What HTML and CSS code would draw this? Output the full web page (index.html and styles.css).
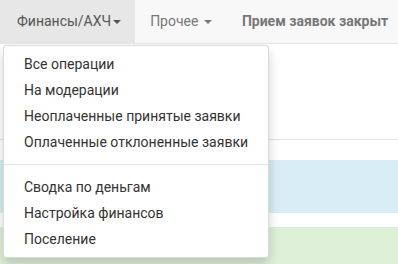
FILE: index.html
```html
<!DOCTYPE html>
<html>
<head>
<meta charset="utf-8">
<link rel="stylesheet" href="styles.css">
</head>
<body>
<nav class="navbar">
  <ul class="nav">
    <li class="nav-item open">
      <a class="nav-link">Финансы/АХЧ<span class="caret"></span></a>
      <ul class="dropdown-menu">
        <li><a>Все операции</a></li>
        <li><a>На модерации</a></li>
        <li><a>Неоплаченные принятые заявки</a></li>
        <li><a>Оплаченные отклоненные заявки</a></li>
        <li class="divider"></li>
        <li><a>Сводка по деньгам</a></li>
        <li><a>Настройка финансов</a></li>
        <li><a>Поселение</a></li>
      </ul>
    </li>
    <li class="nav-item"><a class="nav-link">Прочее <span class="caret"></span></a></li>
    <li class="nav-item"><a class="nav-link bold">Прием заявок закрыт</a></li>
  </ul>
</nav>
<main class="content">
  <div class="spacer"></div>
  <div class="rule"></div>
  <div class="alert info"></div>
  <div class="alert success"></div>
</main>
</body>
</html>
```

FILE: styles.css
```css
* { box-sizing: border-box; }
html, body { margin: 0; padding: 0; }
body {
  font-family: Roboto, "Liberation Sans", sans-serif;
  font-size: 14px;
  line-height: 20px;
  color: #333;
  background: #fff;
  width: 398px;
  height: 264px;
  overflow: hidden;
}
.navbar {
  background: #f8f8f8;
  border-bottom: 1px solid #e7e7e7;
  height: 44px;
}
.nav {
  list-style: none;
  margin: 0;
  padding: 0;
  display: flex;
  height: 43px;
}
.nav-item { position: relative; }
.nav-link {
  display: block;
  padding: 11px 15px 12px 15px;
  color: #777;
  white-space: nowrap;
}
.open > .nav-link { background: #e7e7e7; color: #555; padding-left: 17px; padding-right: 14px; }
.nav-link.bold { font-weight: bold; }
.caret {
  display: inline-block;
  width: 0; height: 0;
  margin-left: 2px;
  vertical-align: middle;
  border-top: 4px solid;
  border-left: 4px solid transparent;
  border-right: 4px solid transparent;
}
.dropdown-menu {
  position: absolute;
  top: 45px;
  left: 3px;
  z-index: 10;
  list-style: none;
  margin: 0;
  padding: 5px 0;
  background: #fff;
  border: 1px solid rgba(0,0,0,.15);
  border-radius: 4px;
  box-shadow: 0 6px 12px rgba(0,0,0,.175);
  white-space: nowrap;
}
.dropdown-menu a {
  display: block;
  padding: 3px 20px;
  line-height: 20px;
  color: #333;
}
.dropdown-menu .divider {
  height: 1px;
  margin: 9px 0;
  background: #e5e5e5;
}
.spacer { height: 95px; }
.rule { height: 1px; background: #e5e5e5; margin-bottom: 20px; }
.info { background: #d9edf7; height: 53px; margin-bottom: 14px; }
.success { background: #dff0d8; height: 37px; }
```
